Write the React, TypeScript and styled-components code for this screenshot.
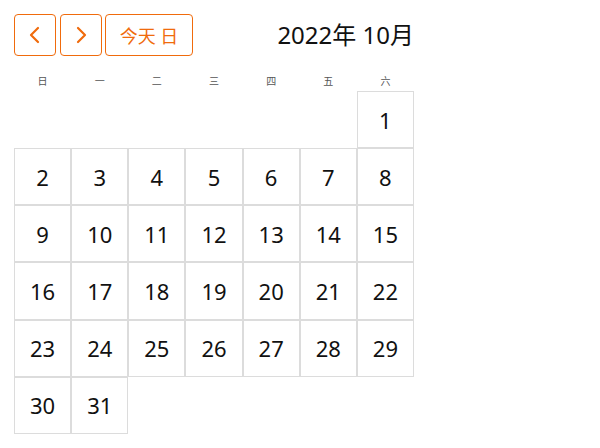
import React from "react";
import styled, { createGlobalStyle } from "styled-components";

const Global = createGlobalStyle`
  body {
    margin: 8px;
    background: #ffffff;
    font-family: "Noto Sans", "Noto Sans CJK SC", sans-serif;
    color: #111;
  }
`;

const Wrap = styled.div`
  width: 400px;
  padding: 6px;
`;

const Header = styled.div`
  display: flex;
  align-items: center;
  justify-content: space-between;
  height: 42px;
`;

const Buttons = styled.div`
  display: flex;
  gap: 4px;
`;

const NavButton = styled.button<{ $wide?: boolean }>`
  box-sizing: border-box;
  height: 42px;
  width: ${(p) => (p.$wide ? "88px" : "42px")};
  margin-left: ${(p) => (p.$wide ? "-1px" : "0")};
  border: 1px solid #f06b0c;
  border-radius: 4px;
  background: #fff;
  color: #f06b0c;
  font-family: "Noto Sans", "Noto Sans CJK SC", sans-serif;
  font-size: 18px;
  display: flex;
  align-items: center;
  justify-content: center;
  padding: 0;
  cursor: pointer;
`;

const Title = styled.div`
  font-size: 24px;
  color: #111;
  white-space: pre;
  line-height: 1;
`;

const WeekRow = styled.div`
  display: grid;
  grid-template-columns: repeat(7, 1fr);
  margin-top: 14px;
  height: 21px;
  align-items: center;
`;

const WeekDay = styled.div`
  text-align: center;
  font-size: 10px;
  color: #555;
`;

const Grid = styled.div`
  display: grid;
  grid-template-columns: repeat(7, 1fr);
  grid-auto-rows: 57.14px;
`;

const Cell = styled.div<{ $empty?: boolean }>`
  box-sizing: border-box;
  border: ${(p) => (p.$empty ? "none" : "1px solid #dcdcdc")};
  display: flex;
  align-items: center;
  justify-content: center;
  font-size: 22px;
  color: #111;
`;

const Chevron = ({ dir }: { dir: "left" | "right" }) => (
  <svg width="14" height="20" viewBox="0 0 14 20" fill="none">
    <path
      d={dir === "left" ? "M10 3 L3 10 L10 17" : "M4 3 L11 10 L4 17"}
      stroke="#f06b0c"
      strokeWidth="2.2"
      strokeLinecap="round"
      strokeLinejoin="round"
    />
  </svg>
);

const weekdays = ["日", "一", "二", "三", "四", "五", "六"];

export default function App() {
  const leading = 6;
  const cells: (number | null)[] = [];
  for (let i = 0; i < leading; i++) cells.push(null);
  for (let d = 1; d <= 31; d++) cells.push(d);

  return (
    <>
      <Global />
      <Wrap>
        <Header>
          <Buttons>
            <NavButton aria-label="上个月">
              <Chevron dir="left" />
            </NavButton>
            <NavButton aria-label="下个月">
              <Chevron dir="right" />
            </NavButton>
            <NavButton $wide>今天 日</NavButton>
          </Buttons>
          <Title>2022年 10月</Title>
        </Header>
        <WeekRow>
          {weekdays.map((w) => (
            <WeekDay key={w}>{w}</WeekDay>
          ))}
        </WeekRow>
        <Grid>
          {cells.map((d, i) =>
            d === null ? <Cell key={"e" + i} $empty /> : <Cell key={d}>{d}</Cell>
          )}
        </Grid>
      </Wrap>
    </>
  );
}
